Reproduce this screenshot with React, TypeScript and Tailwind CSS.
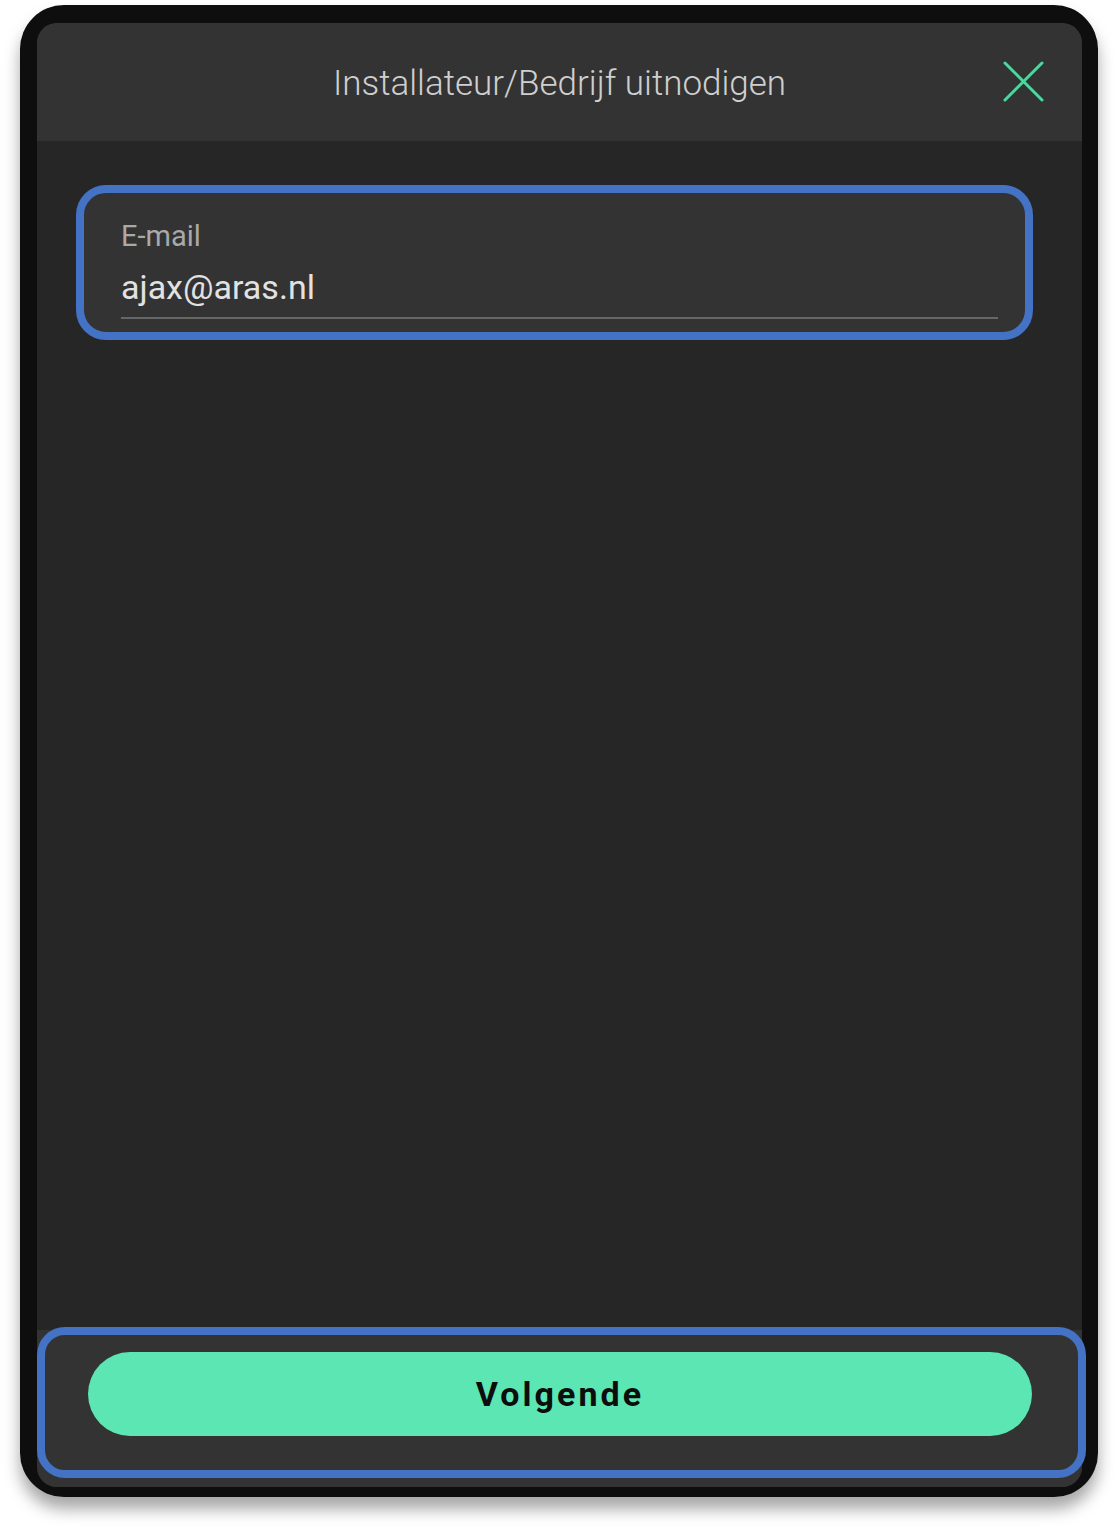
const CloseIcon = () => (
  <svg viewBox="0 0 41 41" className="w-[41px] h-[41px]" fill="none">
    <path d="M2 2 L39 39 M39 2 L2 39" stroke="#47dc9e" strokeWidth="3" strokeLinecap="round" />
  </svg>
);

const App = () => {
  return (
    <div className="min-h-screen bg-white pt-[5px] pl-[20px] pr-[20px] pb-[34px] font-['Roboto',sans-serif]">
      <div className="h-[1492px] rounded-[44px] bg-[#0e0e0e] pt-[18px] pl-[17px] pr-[16px] pb-[10px] flex flex-col shadow-[0_12px_16px_rgba(0,0,0,0.35)]">
        <div className="flex-1 flex flex-col rounded-[20px] bg-[#262626]">
          {/* header */}
          <div className="relative h-[118px] shrink-0 rounded-t-[20px] bg-[#333333] pt-[4px] flex items-center justify-center">
            <h1 className="text-[35px] leading-[40px] font-light text-[#cfcfcf]">Installateur/Bedrijf uitnodigen</h1>
            <button className="absolute right-[38px] top-[38px]">
              <CloseIcon />
            </button>
          </div>

          {/* body */}
          <div className="flex-1">
            <div className="mt-[44px] ml-[39px] mr-[49px] rounded-[30px] border-[8px] border-[#4472c4] bg-[#333333] pt-[27px] pl-[37px] pr-[27px] pb-[13px]">
              <div className="text-[29px] leading-[33px] text-[#a9a9a9]">E-mail</div>
              <div className="mt-[15px] pb-[11px] border-b-2 border-[#666666] text-[34px] leading-[38px] text-[#e2e2e2]">
                ajax@aras.nl
              </div>
            </div>
          </div>

          {/* footer */}
          <div className="relative h-[157px] shrink-0 rounded-b-[20px] bg-[#333333] pt-[22px] pl-[51px] pr-[50px]">
            <button className="w-full h-[84px] rounded-full bg-[#5ce6b3] text-[34px] font-bold tracking-[0.09em] text-[#0d0d0d]">
              Volgende
            </button>
            <div className="absolute left-0 right-[-4px] top-[-3px] bottom-[9px] rounded-[28px] border-[8px] border-[#4472c4] pointer-events-none" />
          </div>
        </div>
      </div>
    </div>
  );
};

export default App;
